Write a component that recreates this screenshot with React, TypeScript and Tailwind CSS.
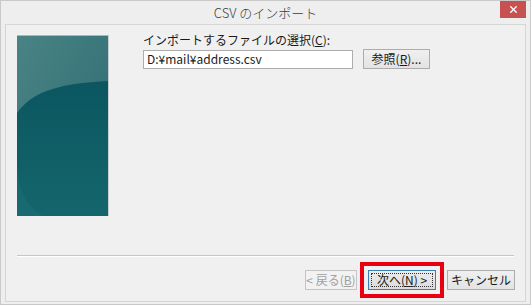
import { X } from 'lucide-react'

const font = { fontFamily: '"Noto Sans CJK JP", "Liberation Sans", sans-serif' }

function WizardArt() {
  return (
    <svg width="92" height="181" viewBox="0 0 92 181" className="block">
      <defs>
        <linearGradient id="top" x1="0" y1="0" x2="1" y2="1">
          <stop offset="0" stopColor="#4a8385" />
          <stop offset="1" stopColor="#2b6a70" />
        </linearGradient>
        <linearGradient id="low" x1="0" y1="0" x2="0" y2="1">
          <stop offset="0" stopColor="#0b5660" />
          <stop offset="1" stopColor="#14666c" />
        </linearGradient>
      </defs>
      <rect width="92" height="181" fill="url(#top)" />
      <path d="M0 78 C 14 58, 40 48, 92 46 L92 181 L0 181 Z" fill="url(#low)" />
      <path d="M0 120 C 0 150, 6 170, 26 181 L0 181 Z" fill="#1b6e73" opacity="0.6" />
      <rect x="0" y="0" width="92" height="1" fill="#a9b9b9" />
      <rect x="91" y="0" width="1" height="181" fill="#c9cfcf" />
    </svg>
  )
}

function Btn({ children, disabled, primary }: { children: React.ReactNode; disabled?: boolean; primary?: boolean }) {
  return (
    <div
      className={`h-[20px] shrink-0 whitespace-nowrap flex items-center justify-center text-[12px] border ${
        disabled
          ? 'w-[52px] border-[#c4c4c4] bg-[#f2f2f2] text-[#a0a0a0] text-[11px]'
          : primary
            ? 'w-[68px] border-[#3c7fb1] bg-gradient-to-b from-[#ececec] to-[#dcdcdc] text-[#1a1a1a]'
            : 'w-[68px] border-[#acacac] bg-gradient-to-b from-[#f0f0f0] to-[#e3e3e3] text-[#1a1a1a]'
      }`}
    >
      {children}
    </div>
  )
}

export default function App() {
  return (
    <div style={font} className="w-[531px] h-[305px] bg-[#eeeeee] border border-[#c9c9c9] flex flex-col overflow-hidden">
      {/* Title bar */}
      <div className="h-[23px] relative flex items-center justify-center shrink-0">
        <span className="text-[13px] text-[#3a3a3a] leading-none font-light">CSV のインポート</span>
        <div className="absolute right-[4px] top-0 w-[26px] h-[17px] bg-[#c75050] flex items-center justify-center">
          <X size={11} strokeWidth={3} color="#fff" />
        </div>
      </div>

      {/* Body */}
      <div className="mx-[4px] mb-[2px] flex-1 bg-[#f0f0f0] border border-[#d6d6d6] flex flex-col">
        <div className="h-[230px] flex shrink-0">
          <div className="ml-[11px] mt-[10px]">
            <WizardArt />
          </div>
          <div className="ml-[34px] mt-[7px] flex flex-col">
            <div className="text-[12px] text-[#1a1a1a] leading-[16px]">
              インポートするファイルの選択(<span className="underline">C</span>):
            </div>
            <div className="flex items-center mt-[1px]">
              <div className="w-[210px] h-[19px] bg-white border border-[#adadad] flex items-center pl-[3px] text-[12px] text-[#1a1a1a]">
                D:¥mail¥address.csv
              </div>
              <div className="ml-[10px] w-[67px] h-[20px] border border-[#acacac] bg-gradient-to-b from-[#f0f0f0] to-[#e3e3e3] flex items-center justify-center text-[12px] text-[#1a1a1a]">
                参照(<span className="underline">R</span>)...
              </div>
            </div>
          </div>
        </div>

        {/* Separator */}
        <div className="mx-[11px] h-[2px] border-t border-[#c6c6c6] border-b border-b-white shrink-0" />

        {/* Buttons */}
        <div className="flex items-center justify-end pr-[10px] pt-[5px]">
          <Btn disabled>
            &lt; 戻る(<span className="underline">B</span>)
          </Btn>
          <div className="ml-[3px] shrink-0 border-[4px] border-[#e60012] p-[4px]">
            <div className="relative">
              <Btn primary>
                次へ(<span className="underline">N</span>) &gt;
              </Btn>
              <div className="absolute inset-[3px] border border-dotted border-[#333]" />
            </div>
          </div>
          <div className="ml-[3px] shrink-0">
            <Btn>キャンセル</Btn>
          </div>
        </div>
      </div>
    </div>
  )
}
